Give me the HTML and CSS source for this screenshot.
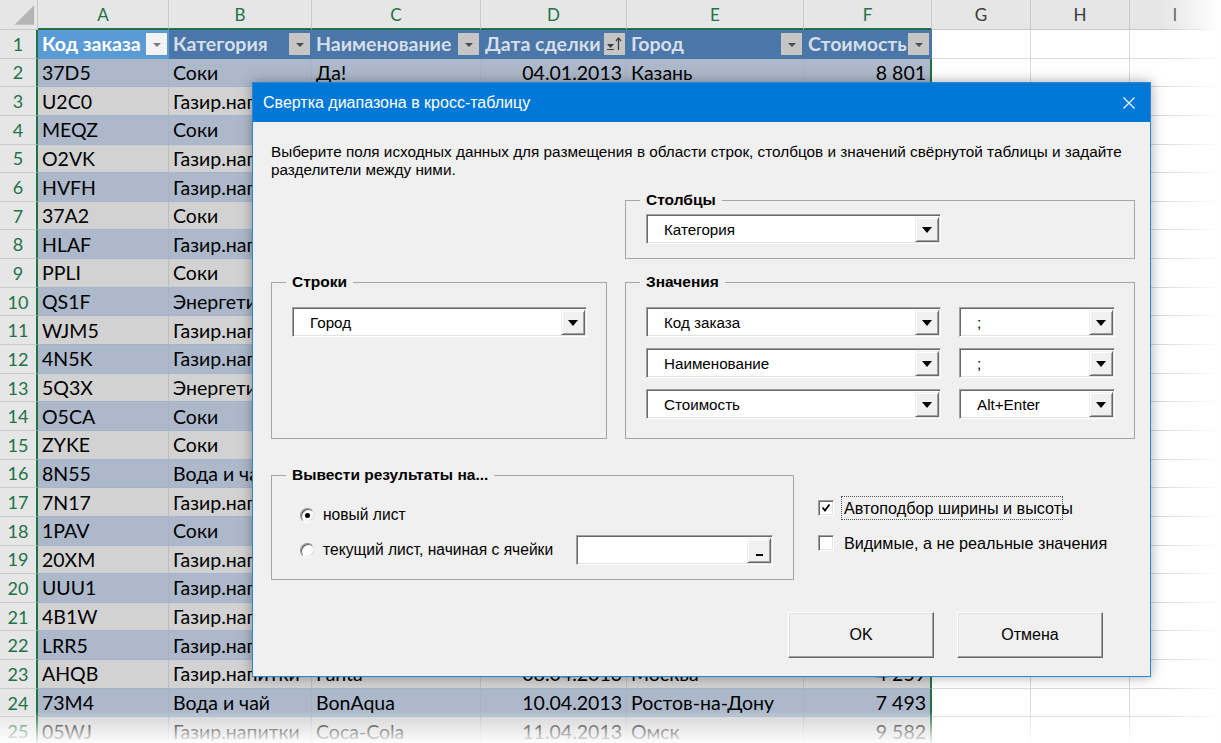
FILE: index.html
```html
<!DOCTYPE html>
<html lang="ru">
<head>
<meta charset="utf-8">
<title>Свертка диапазона в кросс-таблицу</title>
<link rel="stylesheet" href="styles.css">
</head>
<body>
<div class="sheet">
  <div class="r hd">
    <div class="c corner"><svg width="38" height="29" viewBox="0 0 38 29"><polygon points="15,25 35,25 35,5" fill="#b4b4b4"/></svg></div>
    <div class="c sel">A</div><div class="c sel">B</div><div class="c sel">C</div><div class="c sel">D</div><div class="c sel">E</div><div class="c sel">F</div>
    <div class="c">G</div><div class="c">H</div><div class="c">I</div>
  </div>
  <div class="r r1">
    <div class="c n">1</div>
    <div class="c t act"><span class="tx">Код заказа</span><span class="dd lt"><i></i></span></div>
    <div class="c t"><span class="tx">Категория</span><span class="dd"><i></i></span></div>
    <div class="c t"><span class="tx">Наименование</span><span class="dd"><i></i></span></div>
    <div class="c t"><span class="tx">Дата сделки</span><span class="dd"><svg width="21" height="22" viewBox="0 0 21 22"><polygon points="3,11 10,11 6.5,15" fill="#3c3c3c"/><line x1="3" y1="16.5" x2="10" y2="16.5" stroke="#3c3c3c" stroke-width="1"/><line x1="14.5" y1="5" x2="14.5" y2="17" stroke="#3c3c3c" stroke-width="1.2"/><polyline points="12,8 14.5,5 17,8" fill="none" stroke="#3c3c3c" stroke-width="1.2"/></svg></span></div>
    <div class="c t"><span class="tx">Город</span><span class="dd"><i></i></span></div>
    <div class="c t f"><span class="tx">Стоимость</span><span class="dd"><i></i></span></div>
    <div class="c w"></div><div class="c w"></div><div class="c w"></div>
  </div>
  <div class="r even"><div class="c n">2</div><div class="c t">37D5</div><div class="c t">Соки</div><div class="c t">Да!</div><div class="c t rt">04.01.2013</div><div class="c t">Казань</div><div class="c t rt f">8 801</div><div class="c w"></div><div class="c w"></div><div class="c w"></div></div>
  <div class="r odd"><div class="c n">3</div><div class="c t">U2C0</div><div class="c t">Газир.напитки</div><div class="c t"></div><div class="c t"></div><div class="c t"></div><div class="c t f"></div><div class="c w"></div><div class="c w"></div><div class="c w"></div></div>
  <div class="r even"><div class="c n">4</div><div class="c t">MEQZ</div><div class="c t">Соки</div><div class="c t"></div><div class="c t"></div><div class="c t"></div><div class="c t f"></div><div class="c w"></div><div class="c w"></div><div class="c w"></div></div>
  <div class="r odd"><div class="c n">5</div><div class="c t">O2VK</div><div class="c t">Газир.напитки</div><div class="c t"></div><div class="c t"></div><div class="c t"></div><div class="c t f"></div><div class="c w"></div><div class="c w"></div><div class="c w"></div></div>
  <div class="r even"><div class="c n">6</div><div class="c t">HVFH</div><div class="c t">Газир.напитки</div><div class="c t"></div><div class="c t"></div><div class="c t"></div><div class="c t f"></div><div class="c w"></div><div class="c w"></div><div class="c w"></div></div>
  <div class="r odd"><div class="c n">7</div><div class="c t">37A2</div><div class="c t">Соки</div><div class="c t"></div><div class="c t"></div><div class="c t"></div><div class="c t f"></div><div class="c w"></div><div class="c w"></div><div class="c w"></div></div>
  <div class="r even"><div class="c n">8</div><div class="c t">HLAF</div><div class="c t">Газир.напитки</div><div class="c t"></div><div class="c t"></div><div class="c t"></div><div class="c t f"></div><div class="c w"></div><div class="c w"></div><div class="c w"></div></div>
  <div class="r odd"><div class="c n">9</div><div class="c t">PPLI</div><div class="c t">Соки</div><div class="c t"></div><div class="c t"></div><div class="c t"></div><div class="c t f"></div><div class="c w"></div><div class="c w"></div><div class="c w"></div></div>
  <div class="r even"><div class="c n">10</div><div class="c t">QS1F</div><div class="c t">Энергетики</div><div class="c t"></div><div class="c t"></div><div class="c t"></div><div class="c t f"></div><div class="c w"></div><div class="c w"></div><div class="c w"></div></div>
  <div class="r odd"><div class="c n">11</div><div class="c t">WJM5</div><div class="c t">Газир.напитки</div><div class="c t"></div><div class="c t"></div><div class="c t"></div><div class="c t f"></div><div class="c w"></div><div class="c w"></div><div class="c w"></div></div>
  <div class="r even"><div class="c n">12</div><div class="c t">4N5K</div><div class="c t">Газир.напитки</div><div class="c t"></div><div class="c t"></div><div class="c t"></div><div class="c t f"></div><div class="c w"></div><div class="c w"></div><div class="c w"></div></div>
  <div class="r odd"><div class="c n">13</div><div class="c t">5Q3X</div><div class="c t">Энергетики</div><div class="c t"></div><div class="c t"></div><div class="c t"></div><div class="c t f"></div><div class="c w"></div><div class="c w"></div><div class="c w"></div></div>
  <div class="r even"><div class="c n">14</div><div class="c t">O5CA</div><div class="c t">Соки</div><div class="c t"></div><div class="c t"></div><div class="c t"></div><div class="c t f"></div><div class="c w"></div><div class="c w"></div><div class="c w"></div></div>
  <div class="r odd"><div class="c n">15</div><div class="c t">ZYKE</div><div class="c t">Соки</div><div class="c t"></div><div class="c t"></div><div class="c t"></div><div class="c t f"></div><div class="c w"></div><div class="c w"></div><div class="c w"></div></div>
  <div class="r even"><div class="c n">16</div><div class="c t">8N55</div><div class="c t">Вода и чай</div><div class="c t"></div><div class="c t"></div><div class="c t"></div><div class="c t f"></div><div class="c w"></div><div class="c w"></div><div class="c w"></div></div>
  <div class="r odd"><div class="c n">17</div><div class="c t">7N17</div><div class="c t">Газир.напитки</div><div class="c t"></div><div class="c t"></div><div class="c t"></div><div class="c t f"></div><div class="c w"></div><div class="c w"></div><div class="c w"></div></div>
  <div class="r even"><div class="c n">18</div><div class="c t">1PAV</div><div class="c t">Соки</div><div class="c t"></div><div class="c t"></div><div class="c t"></div><div class="c t f"></div><div class="c w"></div><div class="c w"></div><div class="c w"></div></div>
  <div class="r odd"><div class="c n">19</div><div class="c t">20XM</div><div class="c t">Газир.напитки</div><div class="c t"></div><div class="c t"></div><div class="c t"></div><div class="c t f"></div><div class="c w"></div><div class="c w"></div><div class="c w"></div></div>
  <div class="r even"><div class="c n">20</div><div class="c t">UUU1</div><div class="c t">Газир.напитки</div><div class="c t"></div><div class="c t"></div><div class="c t"></div><div class="c t f"></div><div class="c w"></div><div class="c w"></div><div class="c w"></div></div>
  <div class="r odd"><div class="c n">21</div><div class="c t">4B1W</div><div class="c t">Газир.напитки</div><div class="c t"></div><div class="c t"></div><div class="c t"></div><div class="c t f"></div><div class="c w"></div><div class="c w"></div><div class="c w"></div></div>
  <div class="r even"><div class="c n">22</div><div class="c t">LRR5</div><div class="c t">Газир.напитки</div><div class="c t"></div><div class="c t"></div><div class="c t"></div><div class="c t f"></div><div class="c w"></div><div class="c w"></div><div class="c w"></div></div>
  <div class="r odd"><div class="c n">23</div><div class="c t">AHQB</div><div class="c t">Газир.напитки</div><div class="c t">Fanta</div><div class="c t rt">08.04.2013</div><div class="c t">Москва</div><div class="c t rt f">4 259</div><div class="c w"></div><div class="c w"></div><div class="c w"></div></div>
  <div class="r even"><div class="c n">24</div><div class="c t">73M4</div><div class="c t">Вода и чай</div><div class="c t">BonAqua</div><div class="c t rt">10.04.2013</div><div class="c t">Ростов-на-Дону</div><div class="c t rt f">7 493</div><div class="c w"></div><div class="c w"></div><div class="c w"></div></div>
  <div class="r odd"><div class="c n">25</div><div class="c t">05WJ</div><div class="c t">Газир.напитки</div><div class="c t">Coca-Cola</div><div class="c t rt">11.04.2013</div><div class="c t">Омск</div><div class="c t rt f">9 582</div><div class="c w"></div><div class="c w"></div><div class="c w"></div></div>
</div>

<div class="dialog">
  <div class="titlebar">
    <span class="title">Свертка диапазона в кросс-таблицу</span>
    <svg class="close" width="12" height="12" viewBox="0 0 12 12"><path d="M0.5 0.5 L11.5 11.5 M11.5 0.5 L0.5 11.5" stroke="#fff" stroke-width="1.1" fill="none"/></svg>
  </div>
  <div class="dbody">
    <p class="intro">Выберите поля исходных данных для размещения в области строк, столбцов и значений свёрнутой таблицы и задайте разделители между ними.</p>
    <div class="groups">
      <fieldset class="grp g-cols">
        <legend>Столбцы</legend>
        <div class="combo"><span class="v">Категория</span><span class="arrow"><i></i></span></div>
      </fieldset>
      <fieldset class="grp g-rows">
        <legend>Строки</legend>
        <div class="combo"><span class="v">Город</span><span class="arrow"><i></i></span></div>
      </fieldset>
      <fieldset class="grp g-vals">
        <legend>Значения</legend>
        <div class="vals">
          <div class="vrow">
            <div class="combo"><span class="v">Код заказа</span><span class="arrow"><i></i></span></div>
            <div class="combo sm"><span class="v">;</span><span class="arrow"><i></i></span></div>
          </div>
          <div class="vrow">
            <div class="combo"><span class="v">Наименование</span><span class="arrow"><i></i></span></div>
            <div class="combo sm"><span class="v">;</span><span class="arrow"><i></i></span></div>
          </div>
          <div class="vrow">
            <div class="combo"><span class="v">Стоимость</span><span class="arrow"><i></i></span></div>
            <div class="combo sm"><span class="v">Alt+Enter</span><span class="arrow"><i></i></span></div>
          </div>
        </div>
      </fieldset>
    </div>
    <div class="lower">
      <fieldset class="grp g-out">
        <legend>Вывести результаты на...</legend>
        <div class="opt"><span class="radio on"></span><span class="olbl">новый лист</span></div>
        <div class="opt opt2"><span class="radio"></span><span class="olbl">текущий лист, начиная с ячейки</span>
          <div class="refbox"><span class="v"></span><span class="rbtn"><i></i></span></div>
        </div>
      </fieldset>
      <div class="checks">
        <div class="ck"><span class="box"><svg width="12" height="12" viewBox="0 0 12 12"><path d="M2.5 5.5 L5 8.5 L9.5 2.5" stroke="#000" stroke-width="1.8" fill="none"/></svg></span><span class="lbl focus">Автоподбор ширины и высоты</span></div>
        <div class="ck"><span class="box"></span><span class="lbl">Видимые, а не реальные значения</span></div>
      </div>
    </div>
    <div class="buttons">
      <button class="btn">OK</button>
      <button class="btn">Отмена</button>
    </div>
  </div>
</div>

<div class="fade-r"></div>
<div class="fade-b"></div>
</body>
</html>
```

FILE: styles.css
```css
* { box-sizing: border-box; }
html, body { margin: 0; padding: 0; }
body {
  width: 1221px;
  height: 743px;
  overflow: hidden;
  position: relative;
  background: #fff;
  font-family: Lato, "Open Sans", sans-serif;
  color: #000;
}

/* ---------- spreadsheet ---------- */
.sheet { display: flex; flex-direction: column; }
.r {
  display: grid;
  grid-template-columns: 38px 131px 143px 169px 146px 177px 128px 99px 99px 91px;
  height: 28.65px;
  flex: none;
}
.r.hd { height: 30px; }
.c {
  display: flex;
  align-items: center;
  padding: 0 4px;
  border-right: 1px solid #dadada;
  border-bottom: 1px solid #dadada;
  white-space: nowrap;
  overflow: hidden;
  min-width: 0;
  font-size: 19.5px;
}
.hd .c {
  background: #e6e6e6;
  border-right-color: #c9c9c9;
  border-bottom-color: #c9c9c9;
  justify-content: center;
  font-size: 17px;
  color: #3a3a3a;
}
.hd .sel { color: #217346; border-bottom: 2px solid #217346; }
.hd .corner { padding: 0; align-items: flex-end; justify-content: flex-end; }
.n {
  justify-content: center;
  background: #e6e6e6;
  color: #217346;
  border-right: 2px solid #217346;
  border-bottom-color: #c9c9c9;
  font-size: 18px;
  padding: 0;
}
.even .t { background: #adb9ca; border-right-color: #a7b3c4; border-bottom-color: #a2b5cd; }
.odd .t { background: #d2d2d2; border-right-color: #bdbdbd; border-bottom-color: #a2b5cd; }
.rt { justify-content: flex-end; }
.r .f { border-right: 2px solid #217346; }

.r1 .t {
  background: #4a76a8;
  color: #d7dee8;
  font-weight: 700;
  border-right-color: #4a76a8;
  border-bottom-color: #4a76a8;
  padding-right: 1px;
}
.r1 .act { background: #5b9bd5; color: #fff; border-right-color: #5b9bd5; border-bottom-color: #5b9bd5; }
.tx { flex: 1; overflow: hidden; min-width: 0; }
.dd {
  flex: none;
  width: 21px;
  height: 22px;
  background: #c6c6c6;
  display: flex;
  align-items: center;
  justify-content: center;
}
.dd i {
  display: block;
  border-left: 4px solid transparent;
  border-right: 4px solid transparent;
  border-top: 4px solid #4c4c4c;
  margin-top: 2px;
}
.dd.lt { background: #f3f3f3; }
.dd.lt i { border-top-color: #7a7a7a; }

/* ---------- dialog ---------- */
.dialog {
  position: absolute;
  left: 252px;
  top: 82px;
  width: 899px;
  height: 595px;
  border: 1px solid #2a86d6;
  background: #f0f0f0;
  box-shadow: 0 0 12px rgba(0, 0, 0, 0.35);
  font-family: "Liberation Sans", Arial, sans-serif;
  display: flex;
  flex-direction: column;
}
.titlebar {
  height: 39px;
  flex: none;
  background: #0078d7;
  color: #fff;
  display: flex;
  align-items: center;
  justify-content: space-between;
  padding: 0 15px 0 10px;
  font-size: 16px;
}
.dbody {
  flex: 1;
  padding: 21px 0 0 18px;
  display: flex;
  flex-direction: column;
}
.intro { margin: 0; font-size: 15.3px; line-height: 18px; width: 870px; }

.groups {
  margin-top: 12px;
  display: grid;
  grid-template-columns: 336px 510px;
  column-gap: 18px;
  row-gap: 14px;
}
.grp {
  margin: 0;
  min-width: 0;
  border: 1px solid #a6a6a6;
  padding: 5px 19px 14px 20px;
}
.grp legend {
  font-weight: 700;
  font-size: 15.5px;
  line-height: 18px;
  padding: 0 6px;
  margin-left: -6px;
}
.g-cols { grid-column: 2; }
.g-rows, .g-vals { padding-top: 16px; padding-bottom: 19px; }
.vals { display: flex; flex-direction: column; gap: 11px; }
.vrow { display: flex; gap: 18px; }

.combo, .refbox {
  width: 295px;
  height: 30px;
  display: flex;
  background: #fff;
  border: 1px solid;
  border-color: #a0a0a0 #fff #fff #a0a0a0;
  box-shadow: inset 1px 1px 0 #696969, inset -1px -1px 0 #e3e3e3;
  padding: 2px 1px 1px 2px;
}
.combo.sm { width: 156px; }
.combo .v {
  flex: 1;
  display: flex;
  align-items: center;
  padding-left: 15px;
  font-size: 15.2px;
}
.arrow, .rbtn {
  flex: none;
  width: 24px;
  background: #f0f0f0;
  border: 1px solid;
  border-color: #f0f0f0 #696969 #696969 #f0f0f0;
  box-shadow: inset 1px 1px 0 #fff, inset -1px -1px 0 #a0a0a0;
  display: flex;
  align-items: center;
  justify-content: center;
}
.arrow i {
  display: block;
  border-left: 5px solid transparent;
  border-right: 5px solid transparent;
  border-top: 6px solid #000;
}

.lower { display: flex; margin-top: 27px; }
.g-out { width: 523px; padding: 20px 20px 14px 20px; }
.opt { display: flex; align-items: center; height: 22px; }
.opt2 { height: 30px; margin-top: 9px; }
.radio {
  flex: none;
  width: 15px;
  height: 15px;
  margin-left: 8px;
  border-radius: 50%;
  background: #fff;
  border: 1px solid;
  border-color: #8c8c8c #e8e8e8 #fff #8c8c8c;
  box-shadow: inset 1px 1px 0 #5f5f5f, inset -1px -1px 0 #e3e3e3;
  display: flex;
  align-items: center;
  justify-content: center;
}
.radio.on::after {
  content: "";
  width: 5px;
  height: 5px;
  border-radius: 50%;
  background: #000;
}
.olbl { margin-left: 8px; font-size: 15.6px; }
.refbox { width: 197px; margin-left: auto; }
.refbox .v { flex: 1; }
.rbtn { align-items: flex-end; padding-bottom: 6px; }
.rbtn i { display: block; width: 7px; height: 2px; background: #000; }

.checks {
  margin-left: 24px;
  padding-top: 30px;
  display: flex;
  flex-direction: column;
  gap: 11px;
}
.ck { display: flex; align-items: center; height: 24px; }
.box {
  flex: none;
  width: 16px;
  height: 16px;
  background: #fff;
  border: 1px solid;
  border-color: #a0a0a0 #fff #fff #a0a0a0;
  box-shadow: inset 1px 1px 0 #696969, inset -1px -1px 0 #e3e3e3;
  display: flex;
  align-items: center;
  justify-content: center;
  margin-right: 7px;
}
.lbl {
  flex: none;
  min-width: 0;
  width: 222px;
  height: 24px;
  border: 1px dotted transparent;
  padding-left: 2px;
  display: block;
  line-height: 22px;
  white-space: nowrap;
  overflow: visible;
  font-size: 16.2px;
}
.lbl.focus { border-color: #555; }

.buttons {
  display: flex;
  justify-content: flex-end;
  gap: 23px;
  margin-top: 32px;
  padding-right: 47px;
}
.btn {
  width: 146px;
  height: 46px;
  background: #f0f0f0;
  border: 1px solid;
  border-color: #fff #696969 #696969 #fff;
  box-shadow: inset -1px -1px 0 #a0a0a0, inset 1px 1px 0 #e3e3e3;
  font-family: "Liberation Sans", Arial, sans-serif;
  font-size: 16px;
  color: #000;
  padding: 0;
}

/* ---------- photo fades ---------- */
.fade-r {
  position: absolute;
  top: 0;
  right: 0;
  width: 60px;
  height: 743px;
  background: linear-gradient(to right, rgba(255,255,255,0), #fff);
  pointer-events: none;
}
.fade-b {
  position: absolute;
  left: 0;
  bottom: 0;
  width: 100%;
  height: 32px;
  background: linear-gradient(rgba(255,255,255,0), rgba(255,255,255,0.95));
  pointer-events: none;
}
```
